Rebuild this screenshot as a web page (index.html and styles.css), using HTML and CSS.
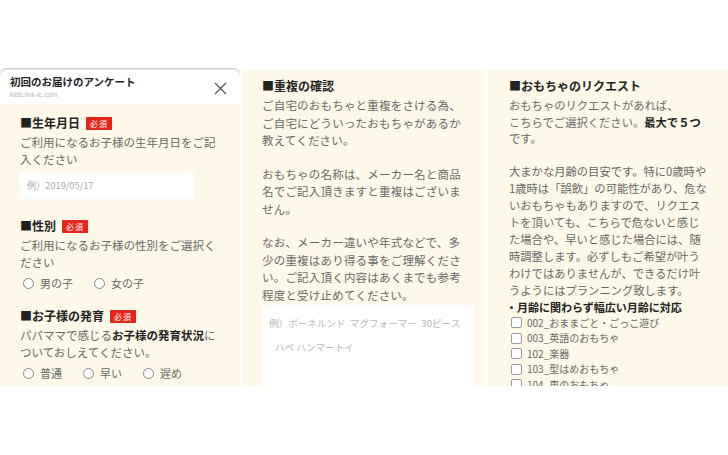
FILE: index.html
```html
<!DOCTYPE html>
<html lang="ja">

<head>
    <meta charset="UTF-8">
    <meta name="viewport" content="width=device-width, initial-scale=1.0">
    <title>初回のお届けのアンケート</title>
    <link rel="stylesheet" href="styles.css">
</head>

<body>

    <div class="shots">

        <!-- Screen 1: basic info -->
        <div class="screen screen-first">
            <div class="sheet-head">
                <div>
                    <div class="sheet-title">初回のお届けのアンケート</div>
                    <div class="sheet-url">kids.link-lc.com</div>
                </div>
                <svg class="close" width="13" height="13" viewBox="0 0 13 13">
                    <path d="M1 1 L12 12 M12 1 L1 12" stroke="#555" stroke-width="1.3" fill="none" />
                </svg>
            </div>

            <div class="screen-body">
                <h3 class="q-title">■生年月日 <span class="badge">必須</span></h3>
                <p class="q-text">ご利用になるお子様の生年月日をご記<br>入ください</p>
                <div class="input">例）2019/05/17</div>

                <h3 class="q-title q-gap">■性別 <span class="badge">必須</span></h3>
                <p class="q-text">ご利用になるお子様の性別をご選択く<br>ださい</p>
                <div class="radios">
                    <label><span class="radio"></span>男の子</label>
                    <label><span class="radio"></span>女の子</label>
                </div>

                <h3 class="q-title q-gap2">■お子様の発育 <span class="badge">必須</span></h3>
                <p class="q-text">パパママで感じる<b>お子様の発育状況</b>に<br>ついておしえてください。</p>
                <div class="radios">
                    <label><span class="radio"></span>普通</label>
                    <label><span class="radio"></span>早い</label>
                    <label><span class="radio"></span>遅め</label>
                </div>
            </div>
        </div>

        <!-- Screen 2: duplicates -->
        <div class="screen screen-mid">
            <h3 class="q-title">■重複の確認</h3>
            <p class="q-text wide">ご自宅のおもちゃと重複をさける為、<br>ご自宅にどういったおもちゃがあるか<br>教えてください。</p>
            <p class="q-text wide">おもちゃの名称は、メーカー名と商品<br>名でご記入頂きますと重複はございま<br>せん。</p>
            <p class="q-text wide">なお、メーカー違いや年式などで、多<br>少の重複はあり得る事をご理解くださ<br>い。ご記入頂く内容はあくまでも参考<br>程度と受け止めてください。</p>
            <div class="textarea">
                <div>例）ボーネルンド&nbsp; マグフォーマー&nbsp; 30ピース</div>
                <div class="indent">ハペ ハンマートイ</div>
            </div>
        </div>

        <!-- Screen 3: requests -->
        <div class="screen screen-last">
            <h3 class="q-title">■おもちゃのリクエスト</h3>
            <p class="q-text tight">おもちゃのリクエストがあれば、<br>こちらでご選択ください。<b>最大で５つ</b><br>です。</p>
            <p class="q-text">大まかな月齢の目安です。特に0歳時や<br>1歳時は「誤飲」の可能性があり、危な<br>いおもちゃもありますので、リクエス<br>トを頂いても、こちらで危ないと感じ<br>た場合や、早いと感じた場合には、随<br>時調整します。必ずしもご希望が叶う<br>わけではありませんが、できるだけ叶<br>うようにはプランニング致します。</p>
            <div class="group-title">・月齢に関わらず幅広い月齢に対応</div>
            <ul class="checks">
                <li><span class="box"></span>002_おままごと・ごっこ遊び</li>
                <li><span class="box"></span>003_英語のおもちゃ</li>
                <li><span class="box"></span>102_楽器</li>
                <li><span class="box"></span>103_型はめおもちゃ</li>
                <li><span class="box"></span>104_車のおもちゃ</li>
            </ul>
        </div>

    </div>

</body>

</html>
```

FILE: styles.css
```css
/* Reset */
* {
    margin: 0;
    padding: 0;
    box-sizing: border-box;
}

body {
    font-family: "Noto Sans CJK JP", "Noto Sans", sans-serif;
    background-color: #ffffff;
    color: #686868;
    width: 728px;
    height: 455px;
    overflow: hidden;
}

/* Row of three phone screens */
.shots {
    display: flex;
    gap: 2px;
    margin-top: 68px;
    height: 318px;
}

.screen {
    background-color: #fdf8e7;
    overflow: hidden;
}

.screen-first {
    width: 240px;
}

.screen-mid {
    width: 243px;
    margin-top: 2px;
    padding: 6px 11px 0 20px;
}

.screen-last {
    flex: 1;
    margin-top: 2px;
    padding: 6px 8px 0 22px;
}

/* Sheet header */
.sheet-head {
    height: 36px;
    background-color: #fff;
    border-radius: 7px 7px 0 0;
    border-top: 1px solid #c8c8c8;
    box-shadow: inset 0 1px 0 #e6e6e6;
    display: flex;
    justify-content: space-between;
    align-items: center;
    padding: 2px 10px 0 10px;
}

.sheet-title {
    font-size: 10.5px;
    font-weight: bold;
    color: #222;
    line-height: 14px;
}

.sheet-url {
    font-size: 7px;
    color: #b5b5b5;
    line-height: 11px;
    font-family: "Liberation Sans", Arial, sans-serif;
}

.close {
    margin-right: 3px;
    margin-top: 2px;
}

.screen-body {
    padding: 9px 20px 0 20px;
}

/* Questions */
.q-title {
    font-size: 12px;
    font-weight: bold;
    color: #222;
    line-height: 20px;
    display: flex;
    align-items: center;
    gap: 6px;
}

.q-gap {
    margin-top: 17px;
}

.q-gap2 {
    margin-top: 13px;
}

.badge {
    background-color: #e5251a;
    color: #fff;
    font-size: 8px;
    font-weight: normal;
    line-height: 13px;
    padding: 0 4px;
    border-radius: 1px;
    letter-spacing: 1px;
}

.q-text {
    font-size: 11.5px;
    line-height: 17px;
    margin-top: 1px;
    white-space: nowrap;
}

.q-text b {
    color: #222;
}

.screen-mid .q-text {
    line-height: 17.5px;
    margin-bottom: 16px;
    letter-spacing: 0.2px;
}

.screen-mid .q-text:last-of-type {
    margin-bottom: 0;
}

.screen-last .q-text {
    font-size: 11.3px;
    line-height: 17px;
    margin-bottom: 16px;
}

.screen-last .q-text.tight {
    line-height: 16.6px;
}

/* Inputs */
.input {
    margin-top: 4px;
    width: 174px;
    height: 27px;
    background-color: #fff;
    font-size: 9.2px;
    color: #aaa;
    padding-left: 7px;
    line-height: 27px;
}

.radios {
    display: flex;
    gap: 21px;
    height: 20px;
    align-items: center;
    padding-left: 3px;
    margin-top: 2px;
}

.radios label {
    display: flex;
    align-items: center;
    gap: 6px;
    font-size: 11px;
}

.radio {
    width: 11px;
    height: 11px;
    border: 1px solid #888;
    border-radius: 50%;
    background-color: #fff;
}

.textarea {
    margin-top: 1px;
    width: 212px;
    height: 90px;
    background-color: #fff;
    font-size: 9.6px;
    color: #b8b8b8;
    padding: 6px 7px;
    line-height: 24px;
    white-space: nowrap;
}

.textarea .indent {
    padding-left: 6px;
}

/* Request list */
.group-title {
    font-size: 11px;
    font-weight: bold;
    color: #222;
    line-height: 16px;
    margin-top: -16px;
    margin-left: -3px;
}

.checks {
    list-style: none;
}

.checks li {
    display: flex;
    align-items: center;
    gap: 5px;
    font-size: 10px;
    line-height: 15.5px;
    padding-left: 2px;
}

.box {
    width: 11px;
    height: 11px;
    border: 1px solid #999;
    border-radius: 2px;
    background-color: #fff;
}
```
